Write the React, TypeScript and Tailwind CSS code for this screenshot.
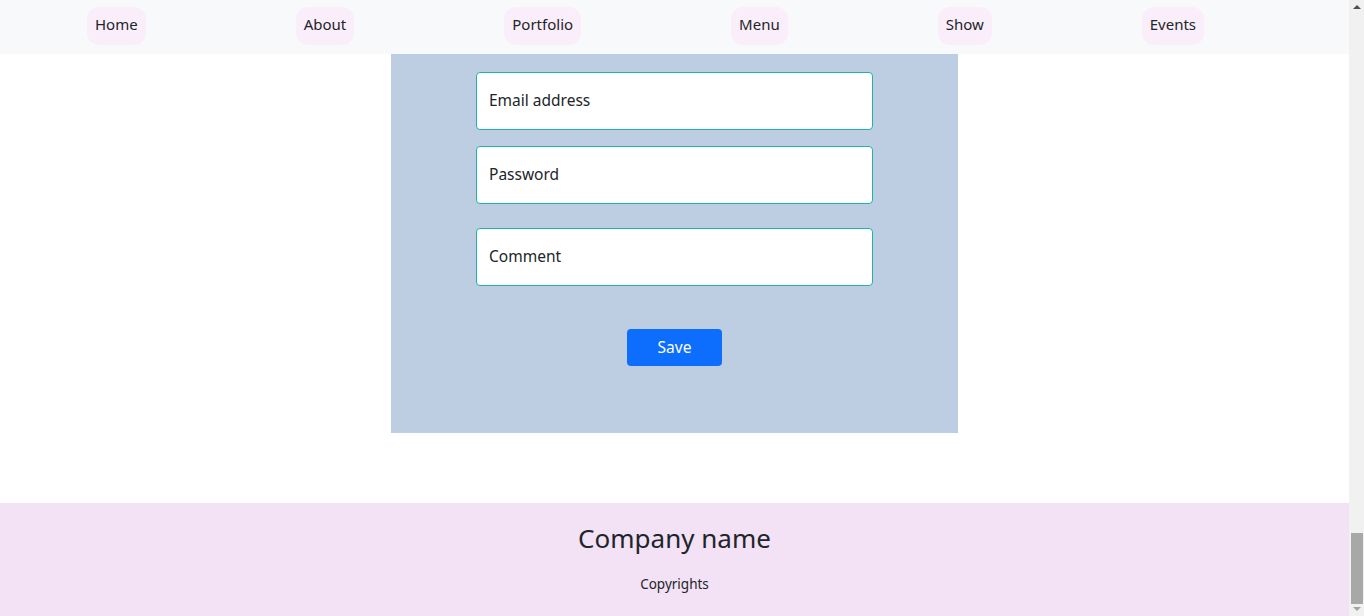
import React from 'react';

const NAV_ITEMS = ['Home', 'About', 'Portfolio', 'Menu', 'Show', 'Events'];

const FIELDS = [
  { label: 'Email address', gap: 'mt-0' },
  { label: 'Password', gap: 'mt-[16px]' },
  { label: 'Comment', gap: 'mt-[24px]' },
];

const font = { fontFamily: '"Segoe UI", "Noto Sans", "Open Sans", sans-serif' };

function Navbar() {
  return (
    <nav className="h-[54px] shrink-0 bg-[#f8f9fa] flex items-start pt-[7px] pl-[87px] gap-[150px]">
      {NAV_ITEMS.map((item) => (
        <a
          key={item}
          href="#"
          className="h-[38px] px-2 pb-[4px] flex items-center rounded-xl bg-[#fbeefb] text-[15px] text-[#212529]"
        >
          {item}
        </a>
      ))}
    </nav>
  );
}

function FormPanel() {
  return (
    <div className="w-[567px] h-[379px] mx-auto bg-[#bdcde2] pt-[18px] flex flex-col items-center">
      {FIELDS.map((field) => (
        <div
          key={field.label}
          className={`${field.gap} w-[397px] h-[58px] bg-white border border-[#20b2aa] rounded-[4px] flex items-center px-3 text-[15.5px] text-[#212529]`}
        >
          {field.label}
        </div>
      ))}
      <button
        type="button"
        className="mt-[43px] w-[95px] h-[37px] rounded-[4px] bg-[#0d6efd] text-white text-[15.5px]"
      >
        Save
      </button>
    </div>
  );
}

function Footer() {
  return (
    <footer className="mt-[70px] h-[113px] bg-[#f3e1f6] flex flex-col items-center text-[#212529]">
      <h3 className="mt-[17px] text-[26px] leading-[36px]">Company name</h3>
      <p className="mt-[18px] text-[13.5px]">Copyrights</p>
    </footer>
  );
}

function Scrollbar() {
  return (
    <div className="w-[15px] h-full bg-[#f1f1f1] flex flex-col items-center">
      <div className="mt-[5px] w-0 h-0 border-l-[4px] border-r-[4px] border-b-[4px] border-l-transparent border-r-transparent border-b-[#505050]" />
      <div className="flex-1" />
      <div className="w-[12px] h-[71px] bg-[#a8a8a8]" />
      <div className="mt-[3px] mb-[5px] w-0 h-0 border-l-[4px] border-r-[4px] border-t-[4px] border-l-transparent border-r-transparent border-t-[#a3a3a3]" />
    </div>
  );
}

export default function App() {
  return (
    <div className="w-[1364px] h-[616px] overflow-hidden flex bg-white" style={font}>
      <div className="w-[1349px] flex flex-col">
        <Navbar />
        <FormPanel />
        <Footer />
      </div>
      <Scrollbar />
    </div>
  );
}
